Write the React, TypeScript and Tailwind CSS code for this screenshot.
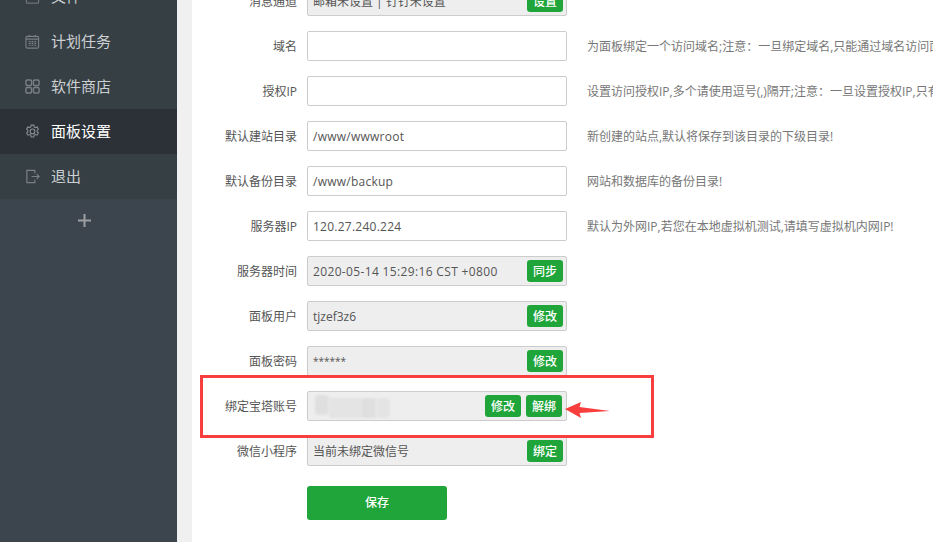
import React from 'react';

const font = "font-['Open_Sans','Noto_Sans_CJK_SC',sans-serif]";

const NavIcon: React.FC<{ name: string }> = ({ name }) => {
  if (name === 'file') {
    return (
      <svg width="15" height="15" viewBox="0 0 16 16" fill="none" stroke="#6f7579" strokeWidth="1.3">
        <rect x="1.5" y="1" width="13" height="14" rx="1" />
      </svg>
    );
  }
  if (name === 'task') {
    return (
      <svg width="15" height="15" viewBox="0 0 16 16" fill="none" stroke="#7a8084" strokeWidth="1.2">
        <rect x="1" y="2.5" width="13.500" height="12.500" rx="1.5" />
        <path d="M1 5.500h13.500M4.500 1v2.500M11 1v2.500" />
        <path d="M4 8h8M4 10h8M4 12h8" strokeDasharray="2 1" />
      </svg>
    );
  }
  if (name === 'store') {
    return (
      <svg width="15" height="15" viewBox="0 0 16 16" fill="none" stroke="#7a8084" strokeWidth="1.5">
        <rect x="1" y="1" width="6" height="6" rx="1.4" />
        <rect x="9" y="1" width="6" height="6" rx="1.4" />
        <rect x="1" y="9" width="6" height="6" rx="1.4" />
        <rect x="9" y="9" width="6" height="6" rx="1.4" />
      </svg>
    );
  }
  if (name === 'gear') {
    return (
      <svg width="15" height="15" viewBox="0 0 16 16" fill="none" stroke="#8b9093" strokeWidth="1.1">
        <path d="M6.600 1.200h2.800l.4 1.900 1.300.7 1.800-.7 1.400 2.400-1.400 1.300v1.400l1.400 1.300-1.400 2.400-1.800-.7-1.300.7-.4 1.900H6.600l-.4-1.900-1.300-.7-1.800.7-1.400-2.400 1.400-1.300V6.800l-1.400-1.300 1.400-2.400 1.800.7 1.300-.7z" />
        <circle cx="8" cy="7.900" r="2.500" />
      </svg>
    );
  }
  return (
    <svg width="15" height="15" viewBox="0 0 16 16" fill="none" stroke="#7a8084" strokeWidth="1.3">
      <path d="M10.500 4.500V1.500H2v13h8.500v-3" />
      <path d="M7 8h8M12.500 5.500 15 8l-2.500 2.500" />
    </svg>
  );
};

const navItems = [
  { label: '文件', icon: 'file' },
  { label: '计划任务', icon: 'task' },
  { label: '软件商店', icon: 'store' },
  { label: '面板设置', icon: 'gear', active: true },
  { label: '退出', icon: 'exit' },
];

const GreenBtn: React.FC<{ text: string }> = ({ text }) => (
  <span className="flex h-[22px] w-9 items-center justify-center rounded-[3px] bg-[#20a53a] pt-[1px] text-xs font-medium text-white">
    {text}
  </span>
);

interface RowProps {
  label: string;
  value?: string;
  valueClass?: string;
  readOnly?: boolean;
  buttons?: string[];
  help?: string;
  blurred?: boolean;
}

const Row: React.FC<RowProps> = ({ label, value, valueClass, readOnly, buttons, help, blurred }) => (
  <div className="flex h-[30px] items-center">
    <div className="w-[105px] shrink-0 pt-[2px] text-right text-xs text-[#555]">{label}</div>
    <div
      className={`ml-2.5 flex h-[30px] w-[260px] shrink-0 items-center rounded-[2px] border border-[#ccc] pl-[5px] text-xs text-[#555] ${
        readOnly ? 'bg-[#eee]' : 'bg-white'
      } ${buttons && buttons.length > 1 ? 'pr-[4px]' : 'pr-[3px]'}`}
    >
      {blurred ? (
        <div className="ml-[2px] flex h-[23px] w-[75px] opacity-80">
          <span className="h-[20px] w-[14px] rounded-[4px] bg-[#dcdcdc] blur-[1px]" />
          <span className="mt-[3px] h-[20px] w-[32px] bg-[#e2e2e2] blur-[1px]" />
          <span className="mt-[3px] h-[20px] w-[15px] bg-[#dcdcdc] blur-[1px]" />
          <span className="mt-[3px] h-[20px] w-[14px] rounded-[4px] bg-[#e2e2e2] blur-[1px]" />
        </div>
      ) : (
        <span className={`pt-[2px] ${valueClass ?? ''}`}>{value}</span>
      )}
      {buttons && (
        <div className="ml-auto flex gap-[5px]">
          {buttons.map((b) => (
            <GreenBtn key={b} text={b} />
          ))}
        </div>
      )}
    </div>
    {help && <div className="ml-5 whitespace-nowrap pt-[2px] text-xs text-[#777]">{help}</div>}
  </div>
);

const rows: RowProps[] = [
  { label: '消息通道', value: '邮箱未设置 | 钉钉未设置', readOnly: true, buttons: ['设置'] },
  { label: '域名', help: '为面板绑定一个访问域名;注意：一旦绑定域名,只能通过域名访问面板!' },
  { label: '授权IP', help: '设置访问授权IP,多个请使用逗号(,)隔开;注意：一旦设置授权IP,只有指定IP的电脑能访问面板!' },
  { label: '默认建站目录', value: '/www/wwwroot', valueClass: 'tracking-[0.25px]', help: '新创建的站点,默认将保存到该目录的下级目录!' },
  { label: '默认备份目录', value: '/www/backup', valueClass: 'tracking-[0.25px]', help: '网站和数据库的备份目录!' },
  { label: '服务器IP', value: '120.27.240.224', valueClass: 'tracking-[0.25px]', help: '默认为外网IP,若您在本地虚拟机测试,请填写虚拟机内网IP!' },
  { label: '服务器时间', value: '2020-05-14 15:29:16 CST +0800', valueClass: 'tracking-[0.35px]', readOnly: true, buttons: ['同步'] },
  { label: '面板用户', value: 'tjzef3z6', readOnly: true, buttons: ['修改'] },
  { label: '面板密码', value: '******', valueClass: 'text-[10px]', readOnly: true, buttons: ['修改'] },
  { label: '绑定宝塔账号', readOnly: true, blurred: true, buttons: ['修改', '解绑'] },
  { label: '微信小程序', value: '当前未绑定微信号', readOnly: true, buttons: ['绑定'] },
];

export default function App() {
  return (
    <div className={`relative flex h-[542px] w-[933px] overflow-hidden bg-[#f0f0f0] ${font}`}>
      <aside className="flex w-[177px] shrink-0 flex-col bg-[#3c444d]">
        <nav className="-mt-[26px] bg-[#363f44]">
          {navItems.map((item) => (
            <div
              key={item.label}
              className={`flex h-[45px] items-center pl-[25px] text-[15px] ${
                item.active ? 'bg-[#2c3138] text-white' : 'text-[#ccd0d3]'
              }`}
            >
              <NavIcon name={item.icon} />
              <span className="ml-[11px]">{item.label}</span>
            </div>
          ))}
        </nav>
        <div className="flex h-[42px] items-center justify-center pr-[9px]">
          <svg width="13" height="13" viewBox="0 0 13 13" fill="none" stroke="#9b9fa3" strokeWidth="2">
            <path d="M6.500 0v13M0 6.500h13" />
          </svg>
        </div>
      </aside>

      <main className="ml-[15px] flex-1 overflow-hidden bg-white">
        <div className="-mt-[14px] flex flex-col gap-[15px]">
          {rows.map((r) => (
            <Row key={r.label} {...r} />
          ))}
          <div className="ml-[115px] mt-[5px] flex h-[34px] w-[140px] items-center justify-center rounded-[3px] bg-[#20a53a] text-xs font-medium text-white">
            保存
          </div>
        </div>
      </main>

      {/* annotation drawn on top of the screenshot */}
      <div className="absolute left-[200px] top-[375px] h-[63px] w-[454px] border-[3px] border-[#f93e3e]" />
      <svg className="absolute left-[564px] top-[401px]" width="48" height="18" viewBox="0 0 48 18">
        <path d="M1 8 17 1 15.500 6 46 10 15.500 12 17 17z" fill="#f93e3e" />
      </svg>
    </div>
  );
}
